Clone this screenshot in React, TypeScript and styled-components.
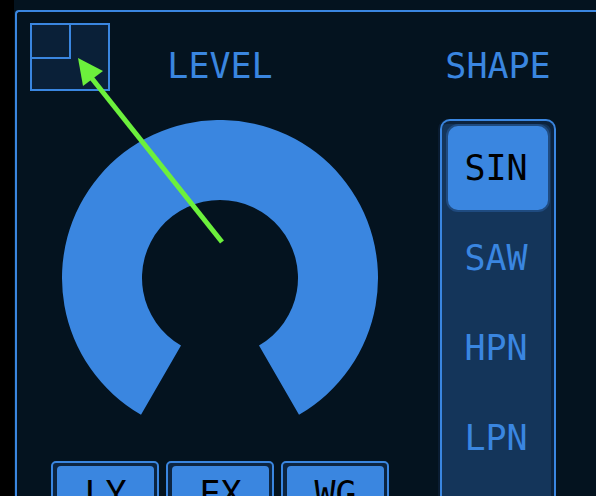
import React, { useState } from "react";
import styled, { createGlobalStyle } from "styled-components";

const BLUE = "#3a86e0";
const BG = "#04131f";

const GlobalStyle = createGlobalStyle`
  html, body {
    margin: 0;
    padding: 0;
    background: #000;
    overflow: hidden;
  }
  body {
    font-family: "DejaVu Sans Mono", "Liberation Mono", monospace;
  }
`;

const Frame = styled.div`
  position: relative;
  margin-left: 14px;
  height: 496px;
  padding-top: 10px;
  box-sizing: border-box;
  background: ${BG};
  overflow: hidden;
`;

const Panel = styled.div`
  display: flex;
  gap: 30px;
  height: 100%;
  padding: 11px 0 0 13px;
  margin-left: 1px;
  box-sizing: border-box;
  border-top: 2px solid ${BLUE};
  border-left: 2px solid ${BLUE};
  border-top-left-radius: 4px;
  background: ${BG};
`;

const LeftColumn = styled.div`
  width: 380px;
  flex: none;
  display: flex;
  flex-direction: column;
  align-items: center;

  & > * {
    flex-shrink: 0;
  }
`;

const RightColumn = styled.div`
  width: 116px;
  flex: none;
  display: flex;
  flex-direction: column;
  align-items: center;

  & > * {
    flex-shrink: 0;
  }
`;

const Header = styled.div`
  width: 100%;
  display: grid;
  grid-template-columns: 80px 1fr 80px;
  align-items: start;
`;

const Title = styled.h2`
  margin: 25px 0 0;
  font-size: 35px;
  line-height: 36px;
  font-weight: normal;
  color: ${BLUE};
  text-align: center;
  white-space: nowrap;
`;

const LayoutIcon = styled.svg`
  display: block;
`;

const Knob = styled.svg`
  display: block;
  margin-top: 29px;
`;

const ModeRow = styled.div`
  display: flex;
  gap: 7px;
  margin-top: 46px;
`;

const ModeSlot = styled.div`
  width: 108px;
  height: 70px;
  box-sizing: border-box;
  padding: 3px 3px 0 4px;
  border: 2px solid ${BLUE};
  border-radius: 5px;
  background: #0c2542;
`;

const ModeButton = styled.button<{ $on: boolean }>`
  width: 100%;
  height: 52px;
  padding: 3px 0 0;
  display: block;
  border: none;
  border-radius: 4px;
  background: ${({ $on }) => ($on ? BLUE : "#153559")};
  color: ${({ $on }) => ($on ? "#000" : BLUE)};
  font-family: inherit;
  font-size: 35px;
  line-height: 36px;
  text-align: center;
`;

const Selector = styled.div`
  margin-top: 35px;
  width: 116px;
  height: 420px;
  box-sizing: border-box;
  padding: 5px 6px;
  display: flex;
  flex-direction: column;
  gap: 6px;
  border: 2px solid ${BLUE};
  border-bottom: none;
  border-radius: 10px 10px 0 0;
  background: #14355a;
  box-shadow: inset -3px 3px 0 rgba(3, 14, 28, 0.45), -2px 0 0 #0a1c31;
`;

const ShapeItem = styled.button<{ $active: boolean }>`
  flex: none;
  height: 84px;
  padding: 0 4px 0 0;
  border: none;
  border-radius: 10px;
  background: ${({ $active }) => ($active ? BLUE : "transparent")};
  box-shadow: ${({ $active }) => ($active ? "0 0 0 2px #1f4b80" : "none")};
  color: ${({ $active }) => ($active ? "#000" : BLUE)};
  font-family: inherit;
  font-size: 35px;
  line-height: 36px;
  text-align: center;
`;

const Pointer = styled.svg`
  position: absolute;
  left: -14px;
  top: 0;
  pointer-events: none;
`;

const shapes = ["SIN", "SAW", "HPN", "LPN"];
const modes = ["LY", "EX", "WG"];

export default function App() {
  const [shape, setShape] = useState("SIN");

  return (
    <>
      <GlobalStyle />
      <Frame>
        <Panel>
          <LeftColumn>
            <Header>
              <LayoutIcon width="80" height="68" viewBox="0 0 80 68">
                <rect x="1" y="1" width="78" height="66" fill="#0a2038" stroke={BLUE} strokeWidth="2" />
                <path d="M40 1 V35 H1" fill="none" stroke={BLUE} strokeWidth="2" />
              </LayoutIcon>
              <Title>LEVEL</Title>
            </Header>
            <Knob width="316" height="295" viewBox="0 0 316 295">
              <path
                d="M79 294.8 A158 158 0 1 1 237 294.8 L197 225.55 A78 78 0 1 0 119 225.55 Z"
                fill={BLUE}
              />
            </Knob>
            <ModeRow>
              {modes.map(m => (
                <ModeSlot key={m}>
                  <ModeButton $on>{m}</ModeButton>
                </ModeSlot>
              ))}
            </ModeRow>
          </LeftColumn>
          <RightColumn>
            <Title>SHAPE</Title>
            <Selector>
              {shapes.map(s => (
                <ShapeItem key={s} $active={s === shape} onClick={() => setShape(s)}>
                  {s}
                </ShapeItem>
              ))}
            </Selector>
          </RightColumn>
        </Panel>
        <Pointer width="596" height="496" viewBox="0 0 596 496">
          <line x1="222" y1="242" x2="90" y2="76" stroke="#6cf03c" strokeWidth="5" />
          <polygon points="78,58 103,71 83,86" fill="#6cf03c" />
        </Pointer>
      </Frame>
    </>
  );
}
